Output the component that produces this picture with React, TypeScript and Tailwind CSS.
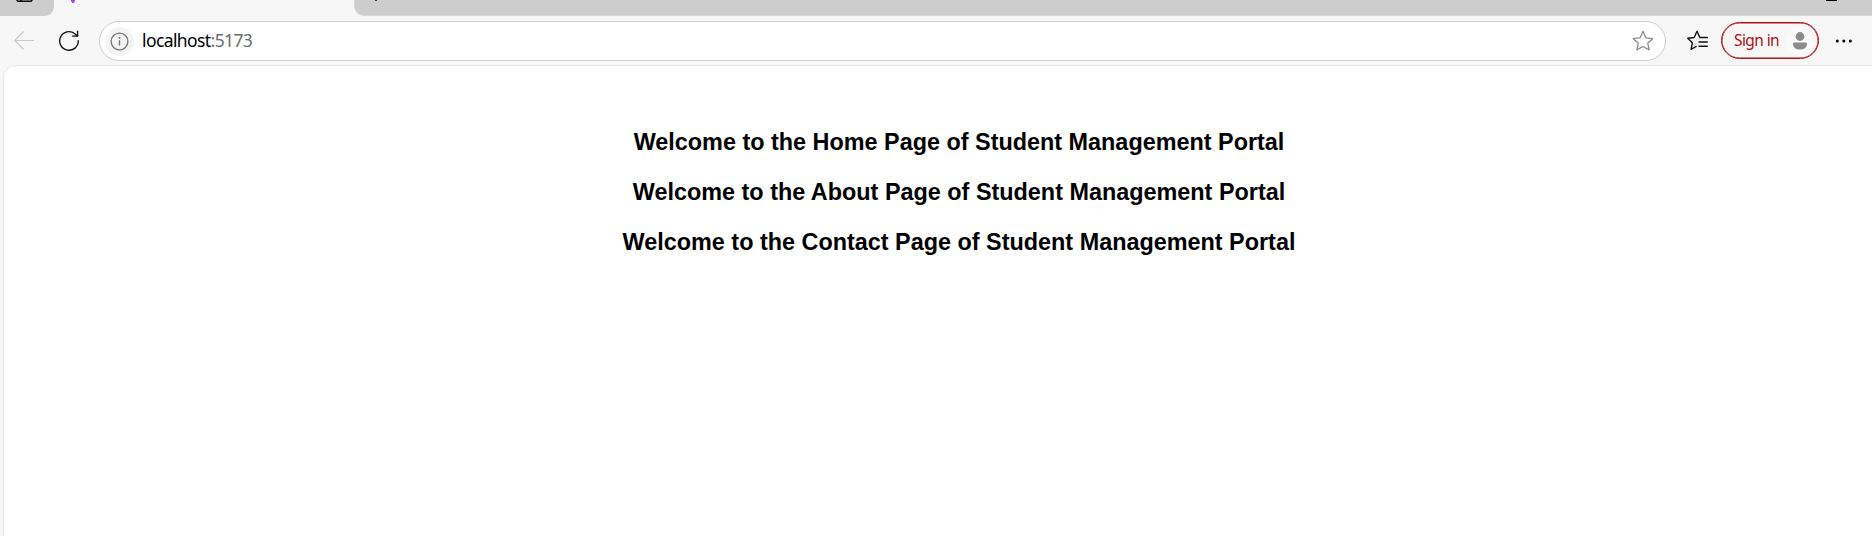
import type { ReactNode } from 'react';

const pages = ['Home', 'About', 'Contact'];

function Icon({ size, className, children }: { size: number; className?: string; children: ReactNode }) {
  return (
    <svg
      width={size}
      height={size}
      viewBox={`0 0 ${size} ${size}`}
      fill="none"
      stroke="currentColor"
      strokeLinecap="round"
      strokeLinejoin="round"
      className={`shrink-0 ${className ?? ''}`}
    >
      {children}
    </svg>
  );
}

function TabStrip() {
  return (
    <div className="flex h-4 shrink-0 bg-[#f7f7f7]">
      <div className="h-[15.5px] w-[54px] rounded-br-[9px] bg-[#cdcdcd] pl-4">
        <svg width="17" height="2" viewBox="0 0 17 2">
          <path d="M0 0H17L15.5 2H1.5Z" fill="#111" />
          <path d="M2 0H4V1H2ZM6 0H15V1H6Z" fill="#666" />
        </svg>
      </div>
      <div className="w-[300px] pl-[17px]">
        <svg width="4" height="3" viewBox="0 0 4 3">
          <path d="M0 0H4V1.5L3 2V3H1V2L0 1.5Z" fill="#b93cff" />
        </svg>
      </div>
      <div className="flex h-[15.5px] grow justify-between rounded-bl-[10px] border-b border-l border-[#d8d8d8] bg-[#cdcdcd] pl-5 pr-[35px]">
        <div className="h-px w-0.5 bg-[#333]" />
        <div className="h-px w-[11px] bg-black" />
      </div>
    </div>
  );
}

function Toolbar() {
  return (
    <div className="flex h-[49px] shrink-0 items-start bg-[#f7f7f7] pl-3.5 pt-[5px]">
      <Icon size={20} className="mt-[9px] text-[#c8c8c8]">
        <path d="M19.5 10.5H.7M9.2 2L.7 10.5L9.2 19" strokeWidth="1.2" />
      </Icon>
      <Icon size={22} className="ml-6 mt-[9px] text-[#151515]">
        <path d="M20.3 10.7A9.3 9.3 0 1 1 16.8 3.7L19.6 6.1" strokeWidth="1.4" />
        <path d="M19.6 1.2V6.1H14.5" strokeWidth="1.4" />
      </Icon>
      <div className="ml-[19px] flex h-10 w-[1567px] items-center rounded-full border border-[#cecece] bg-white pl-[4.5px] pr-[11px]">
        <div className="flex size-[29px] items-center justify-center rounded-full bg-[#f4f4f4]">
          <Icon size={19} className="text-[#767676]">
            <circle cx="9.5" cy="9.5" r="8.4" strokeWidth="1.3" />
            <path d="M9.5 8.7V13" strokeWidth="1.4" />
            <circle cx="9.5" cy="6" r=".9" fill="currentColor" stroke="none" />
          </Icon>
        </div>
        <div className="ml-[8.5px] grow pb-0.5 font-['Noto_Sans',sans-serif] text-[17.5px] leading-6 tracking-[-0.6px] text-black">
          localhost<span className="text-[#6b6b6b]">:5173</span>
        </div>
        <Icon size={22} className="text-[#858585]">
          <path
            d="M11 1.3L13.9 7.8L20.8 8.5L15.7 13.2L17.2 20L11 16.5L4.8 20L6.3 13.2L1.2 8.5L8.1 7.8Z"
            strokeWidth="1.2"
          />
        </Icon>
      </div>
      <Icon size={21} className="ml-[20.5px] mt-[9px] text-[#111]">
        <path
          d="M12.8 7.5L10 1.3L7.2 7.5L.8 8.3L5.3 12.8L4.1 19.3L9.1 16.5M13.5 7.5H20.3M12 12H20.3M12 16.2H20.3"
          strokeWidth="1.4"
        />
      </Icon>
      <button
        type="button"
        className="ml-[13.5px] mt-px flex h-[37px] w-[98px] items-center rounded-full border border-[#b31218] pl-3 text-[#ad1117] shadow-[inset_0_0_0_0.5px_#b31218]"
      >
        <span className="w-[52px] whitespace-nowrap pb-px text-left font-['Noto_Sans',sans-serif] text-[15.5px] leading-5 tracking-[-0.6px]">
          Sign in
        </span>
        <span className="flex size-7 items-center justify-center rounded-full bg-[#fafafa]">
          <svg width="14" height="18" viewBox="0 0 14 18" fill="#8b8b8b">
            <circle cx="7" cy="4.5" r="4.4" />
            <path d="M1.2 10.5H12.8Q14 10.5 14 11.7C14 15.5 11.2 17.5 7 17.5S0 15.5 0 11.7Q0 10.5 1.2 10.5Z" />
          </svg>
        </span>
      </button>
      <svg className="ml-4 mt-[18px] shrink-0" width="18" height="4" viewBox="0 0 18 4">
        <circle cx="2.3" cy="2" r="1.5" />
        <circle cx="8.8" cy="2" r="1.5" />
        <circle cx="15.3" cy="2" r="1.5" />
      </svg>
    </div>
  );
}

export default function App() {
  return (
    <div className="flex h-[536px] w-full flex-col overflow-hidden bg-[#f7f7f7]">
      <TabStrip />
      <Toolbar />
      <main className="ml-[3px] flex grow flex-col items-center rounded-tl-[12px] border-l border-t border-[#e6e6e6] bg-white pl-[42px] pt-[51px]">
        {pages.map((page) => (
          <h2
            key={page}
            className="h-[50px] whitespace-nowrap font-['Liberation_Sans',Arial,sans-serif] text-[23.4px] font-bold leading-[50px] text-black"
          >
            Welcome to the {page} Page of Student Management Portal
          </h2>
        ))}
      </main>
    </div>
  );
}
